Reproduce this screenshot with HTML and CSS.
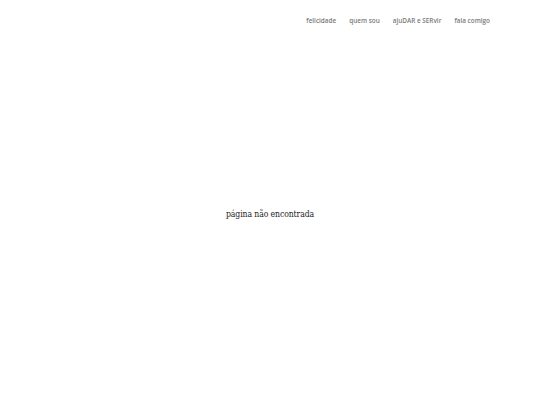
FILE: index.html
```html
<!DOCTYPE html>
<html lang="pt">
<head>
<meta charset="utf-8">
<title>página não encontrada</title>
<link rel="stylesheet" href="styles.css">
</head>
<body>
<header class="top">
  <nav class="menu">
    <a href="#">felicidade</a>
    <a href="#">quem sou</a>
    <a href="#">ajuDAR e SERvir</a>
    <a href="#">fala comigo</a>
  </nav>
</header>
<main class="content">
  <p class="msg">página não encontrada</p>
</main>
</body>
</html>
```
FILE: styles.css
```css
html, body { margin: 0; padding: 0; background: #fff; }
body { width: 540px; height: 405px; overflow: hidden; }
.top { display: flex; justify-content: flex-end; padding: 16px 50px 0 0; height: 27px; box-sizing: border-box; }
.menu { display: flex; gap: 13px; }
.menu a { font-family: "Open Sans", "Noto Sans", sans-serif; font-size: 6.4px; font-weight: 600; color: #7a7a7a; text-decoration: none; line-height: 10px; }
.content { display: flex; justify-content: center; padding-top: 181px; }
.msg { margin: 0; font-family: "DejaVu Serif Condensed", "DejaVu Serif", serif; font-stretch: condensed; font-size: 8.6px; color: #222; line-height: 12px; letter-spacing: -0.1px; }
```
